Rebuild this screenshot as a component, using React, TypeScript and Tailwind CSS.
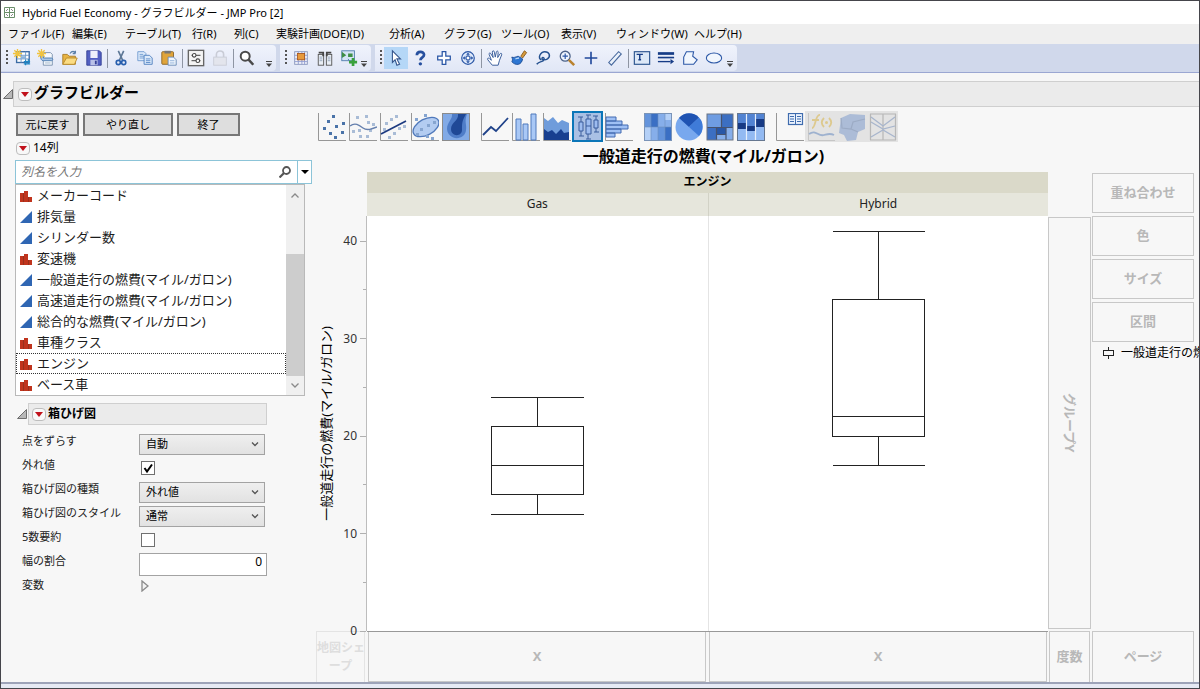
import { useState } from 'react'
import type { ReactNode } from 'react'

const menus = [
  { label: 'ファイル(F)', width: 'w-16' },
  { label: '編集(E)', width: 'w-[53px]' },
  { label: 'テーブル(T)', width: 'w-[67px]' },
  { label: '行(R)', width: 'w-[42px]' },
  { label: '列(C)', width: 'w-[42px]' },
  { label: '実験計画(DOE)(D)', width: 'w-[113px]' },
  { label: '分析(A)', width: 'w-[55px]' },
  { label: 'グラフ(G)', width: 'w-[57px]' },
  { label: 'ツール(O)', width: 'w-[60px]' },
  { label: '表示(V)', width: 'w-[55px]' },
  { label: 'ウィンドウ(W)', width: 'w-[78px]' },
  { label: 'ヘルプ(H)', width: 'w-16' }
]

type Modeling = 'nominal' | 'continuous'

const columns: { name: string; type: Modeling }[] = [
  { name: 'メーカーコード', type: 'nominal' },
  { name: '排気量', type: 'continuous' },
  { name: 'シリンダー数', type: 'continuous' },
  { name: '変速機', type: 'nominal' },
  { name: '一般道走行の燃費(マイル/ガロン)', type: 'continuous' },
  { name: '高速道走行の燃費(マイル/ガロン)', type: 'continuous' },
  { name: '総合的な燃費(マイル/ガロン)', type: 'continuous' },
  { name: '車種クラス', type: 'nominal' },
  { name: 'エンジン', type: 'nominal' },
  { name: 'ベース車', type: 'nominal' }
]

const boxes = [
  { group: 'Gas', min: 12, q1: 14, median: 17, q3: 21, max: 24 },
  { group: 'Hybrid', min: 17, q1: 20, median: 22, q3: 34, max: 41 }
]

const AXIS_MAX = 42.57
const yPos = (v: number) => `${(1 - v / AXIS_MAX) * 100}%`

/* ---------- main toolbar icons, 20x20 ---------- */

const Sparkle = () => (
  <path d="M5 0v10M0 5h10M1.500 1.500l7 7M8.500 1.500l-7 7" stroke="#f0c340" strokeWidth="1.500" />
)

const toolIcons: Record<string, ReactNode> = {
  newTable: (
    <>
      <rect x="4" y="3" width="14" height="12" fill="#fff" stroke="#3b6ca5" strokeWidth="1.500" />
      <path d="M4 7h14M4 11h14M9 3v12M14 3v12" stroke="#6c97c4" />
      <rect x="9" y="8" width="5" height="3" fill="#8ab4dd" />
      <Sparkle />
      <path d="M14 12v6M17 11v6M12 14h7M12 16.500h7" stroke="#1f86c4" strokeWidth="1.300" />
    </>
  ),
  newScript: (
    <>
      <path d="M7 4h8l2 2v12H7z" fill="#f5f8fc" stroke="#7890ad" />
      <path d="M4 8c0-2 3-2 3 0v2h9c2 0 2 3 0 3H7c-2 0-3-2-3-5z" fill="#a9c6e6" stroke="#4b7bb0" />
      <path d="M9 15.500h6" stroke="#9fb4cc" />
      <Sparkle />
    </>
  ),
  open: (
    <>
      <path d="M2 17V6h5l2 2h7v9z" fill="#e8b443" stroke="#a97b24" />
      <path d="M2 17l4-7h12l-3 7z" fill="#fbdc83" stroke="#b98a2c" />
      <path d="M10 5c2-3 5-3 6 0M16 5V2M16 5h-3" stroke="#5b7fa8" strokeWidth="1.400" fill="none" />
    </>
  ),
  save: (
    <>
      <path d="M2 2h14l2 2v14H2z" fill="#5260c2" stroke="#343f95" />
      <rect x="6" y="2" width="8" height="8" fill="#eef1fb" />
      <rect x="6" y="12" width="8" height="6" fill="#b9c1e8" />
      <rect x="11" y="13" width="2" height="4" fill="#343f95" />
    </>
  ),
  cut: (
    <>
      <path d="M7 2l5 11M13 2L8 13" stroke="#5e7896" strokeWidth="1.800" />
      <circle cx="7" cy="15" r="2.300" fill="none" stroke="#285fae" strokeWidth="1.800" />
      <circle cx="13" cy="15" r="2.300" fill="none" stroke="#285fae" strokeWidth="1.800" />
    </>
  ),
  copy: (
    <>
      <path d="M2 3h7l2 2v8H2z" fill="#dceafa" stroke="#6f9bd0" />
      <path d="M4 6h4M4 8h5M4 10h5" stroke="#6f9bd0" />
      <path d="M9 7h6l3 3v7H9z" fill="#dceafa" stroke="#4e7fbe" />
      <path d="M11 11h5M11 13h5M11 15h5" stroke="#5a8bc8" />
    </>
  ),
  paste: (
    <>
      <rect x="2" y="3" width="13" height="14" rx="1" fill="#e0a43a" stroke="#8a6428" />
      <rect x="5" y="2" width="7" height="3" fill="#777" />
      <path d="M9 9h6l3 3v6H9z" fill="#eff5fd" stroke="#6688b5" />
      <path d="M11 13h5M11 15.500h5" stroke="#8fb0d8" />
    </>
  ),
  prefs: (
    <>
      <rect x="1.500" y="1.500" width="17" height="17" fill="#f4f4f4" stroke="#666" strokeWidth="1.500" />
      <path d="M5 7h10M5 13h10" stroke="#666" strokeWidth="1.300" />
      <circle cx="8" cy="7" r="2" fill="#fff" stroke="#444" strokeWidth="1.200" />
      <circle cx="12" cy="13" r="2" fill="#fff" stroke="#444" strokeWidth="1.200" />
    </>
  ),
  lock: (
    <>
      <path d="M6 9V6c0-5 8-5 8 0v3" fill="none" stroke="#c9ccd6" strokeWidth="1.800" />
      <rect x="3" y="9" width="14" height="9" fill="#e3e5ed" stroke="#c9ccd6" />
    </>
  ),
  search: (
    <>
      <circle cx="8" cy="8" r="5" fill="#fff" stroke="#4a4a4a" strokeWidth="2.200" />
      <path d="M11.500 11.500l5.500 6" stroke="#4a4a4a" strokeWidth="2.800" />
    </>
  ),
  journal: (
    <>
      <rect x="3" y="3" width="14" height="14" fill="#f4f6fb" stroke="#8694ba" />
      <path d="M3 7h14M3 11h14M3 14h14M7 3v14M11 3v14M14 3v14" stroke="#8d9bd0" />
      <rect x="6" y="5" width="8" height="7" fill="#e79a3c" stroke="#a8571d" />
    </>
  ),
  binocular: (
    <>
      <rect x="2.500" y="6" width="6" height="12" fill="#e9eef5" stroke="#555" />
      <rect x="11.500" y="6" width="6" height="12" fill="#e9eef5" stroke="#555" />
      <path d="M3 3h6v2H3zM11 3h6v2h-6zM7 3h2v5H7zM11 3h2v5h-2z" fill="#444" />
      <path d="M4 9h3M4 11h3M4 13h3M13 9h3M13 11h3M13 13h3" stroke="#93a4ba" />
    </>
  ),
  join: (
    <>
      <rect x="2" y="2" width="14" height="11" fill="#d5e5f5" stroke="#4f7dab" />
      <path d="M2 3l5 4-5 3zM9 5h5v4H9z" fill="#3f8e45" />
      <path d="M9 11l3 5" stroke="#4f7dab" />
      <path d="M14.500 10v9M10 14.500h9" stroke="#39a13c" strokeWidth="3" />
    </>
  ),
  arrow: <path d="M6 2v13l3-3 2 6 3-1-3-6h4z" fill="#fff" stroke="#34558c" strokeWidth="1.200" />,
  help: (
    <>
      <path d="M6.500 7c0-5 8-5 8-.500 0 3-4 2.500-4 6" fill="none" stroke="#27509f" strokeWidth="3" />
      <circle cx="10.400" cy="16.500" r="1.900" fill="#27509f" />
    </>
  ),
  cross: (
    <path d="M8 3h4v5h5v4h-5v5H8v-5H3V8h5z" fill="#fff" stroke="#2b57a6" strokeWidth="1.400" />
  ),
  scroller: (
    <>
      <circle cx="10" cy="10" r="7" fill="#dfe9fa" stroke="#2b57a6" strokeWidth="1.300" />
      <path d="M10 4l2 2.500H8zM10 16l2-2.500H8zM4 10l2.500-2v4zM16 10l-2.500-2v4z" fill="#2b57a6" />
      <path d="M10 6v8M6 10h8" stroke="#2b57a6" strokeWidth="1.200" />
      <rect x="8" y="8" width="4" height="4" fill="#fff" stroke="#2b57a6" />
    </>
  ),
  hand: (
    <path
      d="M7 18L2 12c-1-2 1-2.500 2-1l2 1.500L3.500 6c-.500-2 1.500-2 2-.500L8 9.500 7 3.500c0-2 2-2 2.300 0l1 5.500L11.500 3.500c.500-1.800 2.300-1.400 2 .500L13 9.500l2.500-4c1-1.500 2.500-.500 1.900 1l-2.400 6-1.500 5.500z"
      fill="#fff"
      stroke="#3c5f9c"
      strokeWidth="1.100"
    />
  ),
  brush: (
    <>
      <path d="M12 8l4-6 2.500 2-4.500 6z" fill="#d79a3c" stroke="#84591c" />
      <path d="M2 9c2 1 4 0 7-1l5 3c-1 7-8 8-12 3 1-1 1-3 0-5z" fill="#2d76d2" stroke="#1c4c94" />
      <path d="M6 11c1 0 3-1 4-1" stroke="#b8d7f8" strokeWidth="1.500" fill="none" />
    </>
  ),
  lasso: (
    <path
      d="M8 12c-4-2-1-9 4-9s7 5 3 8c-3 2-7 1-6-1 1-1.500 3 0 2 2-1 3-5 1-8 5"
      fill="none"
      stroke="#24508f"
      strokeWidth="1.600"
    />
  ),
  magnify: (
    <>
      <circle cx="8" cy="8" r="5.500" fill="#eef4fd" stroke="#4c6288" strokeWidth="1.400" />
      <path d="M8 5v6M5 8h6" stroke="#2b57a6" strokeWidth="1.300" />
      <path d="M12 12l6 6" stroke="#b9822e" strokeWidth="2.800" />
    </>
  ),
  plus: <path d="M10 3v14M3 10h14" stroke="#20489b" strokeWidth="1.800" />,
  ruler: <path d="M3 15L14 3l3 2.500L6 18z" fill="#eaf1fb" stroke="#47689d" strokeWidth="1.200" />,
  text: (
    <>
      <rect x="1.500" y="3" width="17" height="14" fill="#dce8f7" stroke="#2d5690" strokeWidth="1.300" />
      <path d="M4 6h7M7.500 6v6M6 12h3" stroke="#163c86" strokeWidth="1.600" />
    </>
  ),
  lines: (
    <>
      <path d="M1 5h18" stroke="#163c86" strokeWidth="3" />
      <path d="M1 9.500h18" stroke="#163c86" strokeWidth="1.800" />
      <path d="M1 14h14" stroke="#163c86" strokeWidth="1.500" />
      <path d="M15 11l4 3-4 3z" fill="#163c86" />
    </>
  ),
  polygon: <path d="M3 17V9l3-6h8l-1 5 5 4-4 5z" fill="#f1f6fd" stroke="#2b57a6" strokeWidth="1.200" />,
  oval: <ellipse cx="10" cy="10" rx="8.500" ry="5.500" fill="#f1f6fd" stroke="#2b57a6" strokeWidth="1.200" />
}

const toolbars = [
  {
    width: 'w-[275px]',
    groups: [
      ['newTable', 'newScript', 'open', 'save'],
      ['cut', 'copy', 'paste'],
      ['prefs', 'lock'],
      ['search']
    ]
  },
  { width: 'w-[91px]', groups: [['journal', 'binocular', 'join']] },
  {
    width: 'w-[362px]',
    groups: [
      ['arrow', 'help', 'cross', 'scroller'],
      ['hand', 'brush', 'lasso', 'magnify', 'plus', 'ruler'],
      ['text', 'lines', 'polygon', 'oval']
    ]
  }
]

/* ---------- graph type icons, 28x28 ---------- */

const Frame = () => <path d="M.5 0v27.500H28" fill="none" stroke="#979797" />

function Dots({ at, fill = '#a9bcd6' }: { at: number[][]; fill?: string }) {
  return (
    <>
      {at.map(([x, y]) => (
        <rect key={`${x}-${y}`} x={x} y={y} width="3" height="3" fill={fill} />
      ))}
    </>
  )
}

const chartIcons: Record<string, ReactNode> = {
  points: (
    <>
      <Frame />
      <Dots fill="#4a73a8" at={[[14, 2], [9, 7], [24, 9], [5, 14], [17, 12], [11, 19], [23, 18], [16, 23]]} />
    </>
  ),
  smoother: (
    <>
      <Frame />
      <Dots at={[[7, 3], [16, 2], [18, 8], [23, 10], [3, 17], [9, 16], [20, 16], [10, 22], [17, 22]]} />
      <path d="M1 13c5-4 9-1 13 2s9 1 14-1" fill="none" stroke="#6680ae" strokeWidth="1.400" />
    </>
  ),
  fit: (
    <>
      <Frame />
      <Dots at={[[15, 2], [10, 5], [5, 9], [3, 15], [23, 12], [18, 14], [13, 19], [8, 23]]} />
      <path d="M1 21L26 8" stroke="#1c3a80" strokeWidth="1.700" />
    </>
  ),
  ellipse: (
    <>
      <Frame />
      <ellipse cx="15" cy="14" rx="14" ry="8" transform="rotate(-28 15 14)" fill="#b3ccf1" stroke="#5079bb" strokeWidth="1.300" />
      <Dots fill="#86a5d0" at={[[13, 1], [4, 5], [22, 8], [16, 11], [9, 15], [5, 20], [15, 22], [20, 24]]} />
    </>
  ),
  contour: (
    <>
      <rect x=".5" y=".5" width="27" height="27" fill="#82aae6" stroke="#8b8b8b" />
      <path d="M10 1c1 5-5 8-5 15 1 12 18 12 19 1 1-6-2-8 1-16z" fill="#4f7dc8" />
      <path d="M16 1c1 7-7 8-7 15 0 8 11 8 11 1 0-7 0-9 4-16z" fill="#1f4896" />
    </>
  ),
  line: (
    <>
      <Frame />
      <path d="M2 22l8-8 5 4L27 5" fill="none" stroke="#1f4289" strokeWidth="1.800" />
    </>
  ),
  bar: (
    <>
      <Frame />
      <path d="M4 27V6h5v21zM11 27V11h5v16zM19 27V1h5v26z" fill="#a9c8f6" stroke="#4e78bb" />
    </>
  ),
  area: (
    <>
      <Frame />
      <path d="M1 27V5l4 3 5-4 5 6 4-3 7 3v17z" fill="#6f9cdb" />
      <path d="M1 27V16l4 3 4-2 4 4 5-5 3 4 5-1v8z" fill="#173f90" />
    </>
  ),
  box: (
    <>
      <path d="M7 4v19M14 2v24M22 3v16M4 4h5M5 23h5M12 2h5M12 26h5M19 3h5M20 19h5" stroke="#3a5c9c" />
      <path d="M5 9h4v9H5zM12 6h5v15h-5zM20 7h4v8h-4z" fill="#9dbcf0" stroke="#3a5c9c" />
      <path d="M12 13h5" stroke="#3a5c9c" />
    </>
  ),
  histogram: (
    <>
      <Frame />
      <path d="M1 4h10v4H1zM1 8h16v4H1zM1 12h22v4H1zM1 16h15v4H1zM1 20h9v4H1z" fill="#9fc0f4" stroke="#426bb1" />
    </>
  ),
  heatmap: (
    <>
      <rect width="28" height="28" fill="#86aeea" />
      <path d="M7 0h7v14H7zM21 14h7v14h-7z" fill="#3a6fc4" />
      <path d="M0 0h7v14H0zM14 14h7v14h-7z" fill="#6494dc" />
      <path d="M0 14h7v14H0zM21 0h7v7h-7z" fill="#b4d0f7" />
      <path d="M0 14h28M7 0v28M14 0v28M21 0v28" stroke="#6d8dbd" strokeWidth=".6" />
      <rect x=".5" y=".5" width="27" height="27" fill="none" stroke="#7a94b8" />
    </>
  ),
  pie: (
    <>
      <circle cx="14" cy="14" r="13.500" fill="#78a8ee" />
      <path d="M14 14L4 5a13.500 13.500 0 0 1 20-.5z" fill="#1f53b2" />
      <path d="M14 14L24 4.500A13.500 13.500 0 0 1 24 23z" fill="#3f7bd8" />
    </>
  ),
  treemap: (
    <>
      <rect x="1" y="1" width="26" height="26" fill="#86aeea" />
      <path d="M1 15h9v12H1zM16 1h11v13H16z" fill="#3c6fc2" />
      <path d="M1 1h14v13H1z" fill="#6f9de2" />
      <path d="M11 15h9v6h-9z" fill="#2957a6" />
      <path d="M1 14.500h26M15.500 1v13M10.500 14v13M10.500 21.500H20M20 14v13" stroke="#46536e" strokeWidth="1.200" />
      <rect x="1" y="1" width="26" height="26" fill="none" stroke="#6b7484" />
    </>
  ),
  mosaic: (
    <>
      <rect x=".5" y=".5" width="27" height="27" fill="#93baf2" stroke="#667790" />
      <path d="M1 1h8v10H1zM10 1h8v12h-8zM19 1h8v6h-8z" fill="#5283d2" />
      <path d="M1 10h8v6H1zM10 13h8v5h-8zM19 6h8v8h-8z" fill="#173a84" />
      <path d="M9.500 1v26M18.500 1v26" stroke="#e7effb" strokeWidth="1.200" />
    </>
  ),
  caption: (
    <>
      <Frame />
      <rect x="12.500" y=".5" width="14" height="11" fill="#eaf2fd" stroke="#3f6cae" strokeWidth="1.200" />
      <path d="M14 3.500h4M21 3.500h4M14 6h4M21 6h4M14 8.500h4M21 8.500h4M19.500 1v10" stroke="#3f6cae" />
    </>
  ),
  formula: (
    <>
      <path d="M1.500 0v27.500H28" fill="none" stroke="#aaa" />
      <path d="M13 2c-5-1-4 13-8 13M5 7h7M17 5c-3 3-3 6 0 9M22 5c3 3 3 6 0 9" fill="none" stroke="#d9b13c" strokeWidth="1.800" />
      <circle cx="19.500" cy="9.500" r="1.500" fill="#d9b13c" />
      <path d="M2 21c7-5 9 3 15 1 4-1 6-2 10 0" fill="none" stroke="#5c82bd" strokeWidth="1.800" />
    </>
  ),
  map: (
    <>
      <path d="M3 5l9-4 15 1v14l-7 3-2 8-9 1-3-6-5-2z" fill="#7696cc" />
      <path d="M3 5l1 10 9 1 2-7 12-3M13 16l7 3" fill="none" stroke="#5875a8" strokeWidth="1.200" />
    </>
  ),
  parallel: (
    <>
      <path d="M1.500 1v26M14 1v26M26.500 1v26M1 1h26M1 27h26" stroke="#8c8c8c" strokeWidth="1.200" />
      <path d="M2 4l12 9L26 4M2 24l12-7 12 7M2 9l12 7 12-3" fill="none" stroke="#6d89b8" strokeWidth="1.200" />
    </>
  )
}

const chartGroups = [
  ['points', 'smoother', 'fit', 'ellipse', 'contour'],
  ['line', 'bar', 'area', 'box', 'histogram'],
  ['heatmap', 'pie', 'treemap', 'mosaic']
]

function ChartButton({ name, selected, disabled, onClick }: {
  name: string
  selected?: boolean
  disabled?: boolean
  onClick?: () => void
}) {
  return (
    <button
      type="button"
      aria-label={name}
      disabled={disabled}
      onClick={onClick}
      className={`flex h-[31px] w-[31px] items-center justify-center ${
        selected ? 'border-2 border-[#0b76b8] bg-[#aac0e4]' : ''
      } ${disabled ? 'bg-[#e3e3e3]' : ''}`}
    >
      <svg viewBox="0 0 28 28" className={`h-7 w-7 shrink-0 ${disabled ? 'opacity-50' : ''}`}>
        {chartIcons[name]}
      </svg>
    </button>
  )
}

function RedTriangle({ label }: { label: string }) {
  return (
    <button
      type="button"
      aria-label={label}
      className="flex h-[13px] w-[14px] shrink-0 items-center justify-center rounded-sm border border-[#bdbdbd] bg-[#f8f8f8]"
    >
      <svg viewBox="0 0 8 5" className="h-[5px] w-2">
        <path d="M0 0h8L4 5z" fill="#c1121c" />
      </svg>
    </button>
  )
}

function Disclosure() {
  return (
    <svg viewBox="0 0 10 10" className="h-[10px] w-[10px] shrink-0">
      <path d="M9.500 .5v9H.5z" fill="#b8b8b8" stroke="#6e6e6e" />
    </svg>
  )
}

function ColumnIcon({ type }: { type: Modeling }) {
  return (
    <svg viewBox="0 0 12 12" className="h-3 w-3 shrink-0">
      {type === 'nominal' ? (
        <>
          <path d="M0 3h3v9H0zM4 1h4v11H4zM9 7h3v5H9z" fill="#c0341d" />
          <path d="M3 3h1v9H3zM8 7h1v5H8z" fill="#98301c" />
        </>
      ) : (
        <path d="M12 0v12H0z" fill="#2f66b3" />
      )}
    </svg>
  )
}

function OptionRow({ id, label, children }: { id: string; label: string; children: ReactNode }) {
  return (
    <div className="flex h-6 items-start">
      <label htmlFor={id} className="w-[117px] text-[11px] leading-[18px] text-[#222]">{label}</label>
      <div className="flex h-6 flex-1 items-center">{children}</div>
    </div>
  )
}

function Select({ id, value }: { id: string; value: string }) {
  return (
    <div className="relative w-[126px]">
      <select
        id={id}
        defaultValue={value}
        className="block h-[21px] w-full appearance-none border border-[#a3a3a3] bg-gradient-to-b from-[#efefef] to-[#e2e2e2] pl-[6px] text-[11px] leading-4 text-black"
      >
        <option>{value}</option>
      </select>
      <svg viewBox="0 0 8 5" className="pointer-events-none absolute top-2 right-[6px] h-[5px] w-2">
        <path d="M1 .5l3 3 3-3" fill="none" stroke="#555" strokeWidth="1.300" />
      </svg>
    </div>
  )
}

function Check({ id, checked }: { id: string; checked?: boolean }) {
  return (
    <div className="relative ml-[2px] h-[14px] w-[14px]">
      <input
        id={id}
        type="checkbox"
        defaultChecked={checked}
        className="peer block h-[14px] w-[14px] appearance-none border border-[#707070] bg-white"
      />
      <svg viewBox="0 0 14 14" className="pointer-events-none absolute inset-0 hidden h-full w-full peer-checked:block">
        <path d="M3.500 7l2.500 3.500L11 3.500" fill="none" stroke="#000" strokeWidth="2" />
      </svg>
    </div>
  )
}

function DropZone({ label, className = '' }: { label: string; className?: string }) {
  return (
    <div className={`flex items-center justify-center border border-[#c8c8c8] text-[13px] font-bold text-[#b8b8b8] ${className}`}>
      {label}
    </div>
  )
}

function MainToolbar() {
  return (
    <div className="flex h-[29px] gap-1 border-b border-[#9ba7d2] bg-[#d0d8eb] py-px">
      {toolbars.map(bar => (
        <div key={bar.width} className={`flex ${bar.width} shrink-0 items-center rounded-r bg-gradient-to-b from-[#f0f3fc] to-[#e1e7f6] pl-1`}>
          <svg viewBox="0 0 4 16" className="mr-px h-4 w-1 shrink-0">
            <path d="M2 0v16" stroke="#555" strokeWidth="2" strokeDasharray="2 2" />
          </svg>
          {bar.groups.map((group, i) => (
            <div key={group[0]} className="flex items-center">
              {i > 0 && <div className="mx-px h-[19px] w-px bg-[#8e95a3]" />}
              {group.map(name => (
                <button
                  key={name}
                  type="button"
                  aria-label={name}
                  className={`flex h-[22px] w-6 items-center justify-center ${name === 'arrow' ? 'bg-[#b5d7f7]' : ''}`}
                >
                  <svg viewBox="0 0 20 20" fill="none" className="h-[18px] w-[18px]">{toolIcons[name]}</svg>
                </button>
              ))}
            </div>
          ))}
          <svg viewBox="0 0 6 6" className="mr-1 mb-1 ml-auto h-[6px] w-[6px] shrink-0 self-end">
            <path d="M0 .5h6" stroke="#444" />
            <path d="M0 2.500h6L3 6z" fill="#444" />
          </svg>
        </div>
      ))}
    </div>
  )
}

function ColumnPanel() {
  const [active, setActive] = useState('エンジン')

  return (
    <aside className="w-[315px] shrink-0 pt-[6px] pl-[14px]">
      <div className="flex gap-1 pl-px">
        <button type="button" className="h-[23px] w-[63px] border-2 border-[#777] bg-[#dedede] text-[11px] leading-4">元に戻す</button>
        <button type="button" className="h-[23px] w-[90px] border-2 border-[#777] bg-[#dedede] text-[11px] leading-4">やり直し</button>
        <button type="button" className="h-[23px] w-[63px] border-2 border-[#777] bg-[#dedede] text-[11px] leading-4">終了</button>
      </div>

      <div className="flex h-6 items-center gap-[3px] pl-px text-xs">
        <RedTriangle label="列のオプション" />
        <span>14列</span>
      </div>

      {/* Search */}
      <div className="flex h-6 w-[297px] items-center border border-[#8cc4d8] bg-white">
        <input
          type="text"
          aria-label="列名を入力"
          placeholder="列名を入力"
          className="min-w-0 flex-1 pl-[5px] text-xs leading-5 outline-none placeholder:text-[#777] placeholder:italic"
        />
        <svg viewBox="0 0 12 12" className="mr-[6px] h-3 w-3" fill="none" stroke="#555">
          <circle cx="7.500" cy="4.500" r="3.500" strokeWidth="1.800" />
          <path d="M5 7l-4.500 4.500" strokeWidth="2.200" />
        </svg>
        <button type="button" aria-label="検索オプション" className="flex h-full w-[14px] items-center justify-center border-l border-[#8cc4d8]">
          <svg viewBox="0 0 8 4" className="h-1 w-2"><path d="M0 0h8L4 4z" /></svg>
        </button>
      </div>

      {/* Column list */}
      <div className="flex w-[290px] border border-[#b9b9b9] bg-white">
        <ul role="listbox" aria-label="列" className="min-w-0 flex-1">
          {columns.map(col => (
            <li
              key={col.name}
              role="option"
              aria-selected={col.name === active}
              onClick={() => setActive(col.name)}
              className={`flex h-[21px] items-center gap-[5px] border pl-[3px] text-[13px] leading-4 whitespace-nowrap ${
                col.name === active ? 'border-dotted border-[#333]' : 'border-transparent'
              }`}
            >
              <ColumnIcon type={col.type} />
              <span className="pb-px text-[#1c1c1c]">{col.name}</span>
            </li>
          ))}
        </ul>
        <div className="flex w-[18px] flex-col items-center bg-[#f0f0f0]">
          <svg viewBox="0 0 8 5" className="mt-2 h-[5px] w-2">
            <path d="M.5 4.500L4 1l3.500 3.500" fill="none" stroke="#8a8a8a" strokeWidth="1.300" />
          </svg>
          <div className="mt-auto h-[122px] w-full bg-[#cdcdcd]" />
          <svg viewBox="0 0 8 5" className="my-[7px] h-[5px] w-2">
            <path d="M.5 .5L4 4 7.500 .5" fill="none" stroke="#8a8a8a" strokeWidth="1.300" />
          </svg>
        </div>
      </div>

      {/* Box plot options */}
      <div className="mt-[7px] flex items-center gap-px pl-[2px]">
        <Disclosure />
        <div className="flex h-[22px] w-[239px] items-center gap-[2px] border border-[#cfcfcf] bg-[#ebebeb] pl-[3px]">
          <RedTriangle label="箱ひげ図のオプション" />
          <h2 className="text-xs leading-4 font-bold">箱ひげ図</h2>
        </div>
      </div>
      <div className="mt-[7px] pl-[7px]">
        <OptionRow id="jitter" label="点をずらす"><Select id="jitter" value="自動" /></OptionRow>
        <OptionRow id="outliers" label="外れ値"><Check id="outliers" checked /></OptionRow>
        <OptionRow id="box-type" label="箱ひげ図の種類"><Select id="box-type" value="外れ値" /></OptionRow>
        <OptionRow id="box-style" label="箱ひげ図のスタイル"><Select id="box-style" value="通常" /></OptionRow>
        <OptionRow id="five-number" label="5数要約"><Check id="five-number" /></OptionRow>
        <OptionRow id="width-ratio" label="幅の割合">
          <input
            id="width-ratio"
            type="text"
            defaultValue="0"
            className="h-[23px] w-[128px] border border-[#a3a3a3] bg-white pr-1 pb-[6px] text-right text-xs leading-4"
          />
        </OptionRow>
        <OptionRow id="variables" label="変数">
          <button id="variables" type="button" aria-label="変数を表示" className="ml-[2px] pb-1">
            <svg viewBox="0 0 8 12" className="h-3 w-2">
              <path d="M1 1v10l6-5z" fill="#f2f2f2" stroke="#8a8a8a" strokeWidth="1.300" />
            </svg>
          </button>
        </OptionRow>
      </div>
    </aside>
  )
}

function YAxis() {
  return (
    <div className="relative flex items-center border-r border-[#bdbdbd]">
      <span className="ml-[2px] rotate-180 text-[13px] leading-4 whitespace-nowrap [text-orientation:sideways] [writing-mode:vertical-rl]">
        一般道走行の燃費(マイル/ガロン)
      </span>
      <svg className="absolute inset-0 h-full w-full overflow-visible" shapeRendering="crispEdges">
        {[0, 10, 20, 30, 40].map(v => (
          <g key={v}>
            <text x="41" y={yPos(v)} dy="4" textAnchor="end" fontSize="12" fill="#333">{v}</text>
            <line x1="44" x2="100%" y1={yPos(v)} y2={yPos(v)} stroke="#b0b0b0" />
          </g>
        ))}
        {[5, 15, 25, 35].map(v => (
          <line key={v} x1="47" x2="100%" y1={yPos(v)} y2={yPos(v)} stroke="#b0b0b0" />
        ))}
      </svg>
    </div>
  )
}

function BoxPlot({ box }: { box: (typeof boxes)[number] }) {
  const left = '36.5%'
  const right = '63.6%'
  return (
    <svg className="h-full w-full" shapeRendering="crispEdges" stroke="#222" fill="none">
      <line x1={left} x2={right} y1={yPos(box.max)} y2={yPos(box.max)} />
      <line x1="50%" x2="50%" y1={yPos(box.max)} y2={yPos(box.q3)} />
      <rect x={left} width="27.1%" y={yPos(box.q3)} height={`${((box.q3 - box.q1) / AXIS_MAX) * 100}%`} />
      <line x1={left} x2={right} y1={yPos(box.median)} y2={yPos(box.median)} />
      <line x1="50%" x2="50%" y1={yPos(box.q1)} y2={yPos(box.min)} />
      <line x1={left} x2={right} y1={yPos(box.min)} y2={yPos(box.min)} />
    </svg>
  )
}

function GraphPanel() {
  const [element, setElement] = useState('box')

  return (
    <section className="flex min-w-0 flex-1 flex-col pt-1">
      <div className="flex shrink-0 gap-2">
        {chartGroups.map(group => (
          <div key={group[0]} className="flex">
            {group.map(name => (
              <ChartButton key={name} name={name} selected={name === element} onClick={() => setElement(name)} />
            ))}
          </div>
        ))}
        <div className="flex">
          <ChartButton name="caption" />
          <ChartButton name="formula" disabled />
          <ChartButton name="map" disabled />
          <ChartButton name="parallel" disabled />
        </div>
      </div>

      <div className="grid flex-1 grid-cols-[51px_minmax(0,1fr)_43px_108px] grid-rows-[30px_44px_minmax(0,1fr)_51px]">
        <h2 className="col-start-2 pr-2 text-center text-base leading-7 font-bold">一般道走行の燃費(マイル/ガロン)</h2>

        {/* Group headers */}
        <div className="col-start-2 row-start-2 text-center">
          <div className="h-[21px] bg-[#dad9c9] text-xs leading-5 font-bold">エンジン</div>
          <div className="grid h-[23px] grid-cols-2 bg-[#e6e6dc] text-xs leading-[22px] text-[#222]">
            {boxes.map((box, i) => (
              <div key={box.group} className={i > 0 ? 'border-l border-[#d2d2c6]' : ''}>{box.group}</div>
            ))}
          </div>
        </div>

        <div className="col-start-1 row-start-3 grid">
          <YAxis />
        </div>
        <div className="col-start-2 row-start-3 grid grid-cols-2 bg-white">
          {boxes.map((box, i) => (
            <div key={box.group} className={`min-h-0 ${i > 0 ? 'border-l border-[#e4e4e4]' : ''}`}>
              <BoxPlot box={box} />
            </div>
          ))}
        </div>
        <DropZone label="グループY" className="col-start-3 row-start-3 mx-px mt-px mb-[2px] [text-orientation:sideways] [writing-mode:vertical-rl]" />

        {/* Right drop zones */}
        <div className="col-start-4 row-span-2 row-start-2 flex flex-col gap-[3px] overflow-hidden pt-px pl-px">
          <DropZone label="重ね合わせ" className="mr-[5px] h-10" />
          <DropZone label="色" className="mr-[5px] h-10" />
          <DropZone label="サイズ" className="mr-[5px] h-10" />
          <DropZone label="区間" className="mr-[5px] h-10" />
          <div className="flex items-center gap-[6px] pl-[10px] text-xs leading-4 whitespace-nowrap">
            <svg viewBox="0 0 13 12" className="h-3 w-[13px] shrink-0" fill="none" stroke="#222" shapeRendering="crispEdges">
              <path d="M1.500 3.500h10v5h-10zM6.500 0v3.500M6.500 8.500V12" />
            </svg>
            一般道走行の燃費(マイル/ガロン)
          </div>
        </div>

        {/* Bottom drop zones */}
        <div className="col-start-1 row-start-4 mr-[2px] border border-b-0 border-[#e4e4e4] pt-[7px] text-center text-xs leading-[18px] font-bold whitespace-nowrap text-[#dedede]">
          地図シェ<br />ープ
        </div>
        <div className="col-start-2 row-start-4 grid grid-cols-2 gap-[3px] border-t border-[#999] px-px">
          <DropZone label="X" className="border-t-0" />
          <DropZone label="X" className="border-t-0" />
        </div>
        <DropZone label="度数" className="col-start-3 row-start-4 mx-px border-b-0" />
        <DropZone label="ページ" className="col-start-4 row-start-4 mr-[5px] ml-px border-b-0" />
      </div>
    </section>
  )
}

export default function App() {
  return (
    <div className="flex min-h-screen flex-col overflow-hidden border border-[#45454b] bg-[#f7f7f7] font-['Noto_Sans','Noto_Sans_CJK_JP',sans-serif] text-black">
      {/* Title bar */}
      <header className="flex h-[23px] items-center gap-[7px] bg-white pl-[3px]">
        <svg viewBox="0 0 11 11" className="h-[11px] w-[11px]" fill="none" stroke="#6b8f6b">
          <path d="M.5 .5h10v10H.5zM5.500 0v11M0 5.500h11" />
          <path d="M2 4l2-2M7 2l2 2M2 7l2 2M7 9l2-2" stroke="#888" />
        </svg>
        <h1 className="text-[11px] leading-4">Hybrid Fuel Economy - グラフビルダー - JMP Pro [2]</h1>
      </header>

      <nav className="flex h-5 items-center bg-[#efefef] pl-[7px]">
        {menus.map(menu => (
          <button key={menu.label} type="button" className={`${menu.width} shrink-0 text-left text-[11px] leading-4 whitespace-nowrap`}>
            {menu.label}
          </button>
        ))}
      </nav>

      <MainToolbar />

      {/* Report outline */}
      <div className="mt-2 flex items-center pl-[2px]">
        <Disclosure />
        <div className="flex h-[26px] flex-1 items-center gap-[2px] border border-r-0 border-[#cfcfcf] bg-[#ebebeb] pl-1">
          <RedTriangle label="グラフビルダーのオプション" />
          <h1 className="pb-1 text-[15px] leading-5 font-bold">グラフビルダー</h1>
        </div>
      </div>

      <main className="flex flex-1">
        <ColumnPanel />
        <GraphPanel />
      </main>

      <footer className="h-[6px] border-t-2 border-[#9da3b8] bg-[#e6eaf4]" />
    </div>
  )
}
